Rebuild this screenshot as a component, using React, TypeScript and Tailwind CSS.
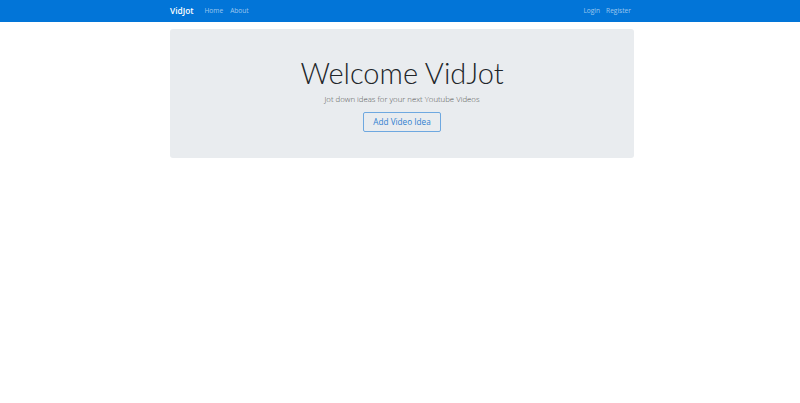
export default function App() {
  return (
    <div className="min-h-[403px] bg-white" style={{ fontFamily: '"Open Sans", "Liberation Sans", sans-serif' }}>
      <nav className="h-[22px] bg-[#0275d8] pl-[4px]">
        <div className="mx-auto flex h-full w-[464px] items-center justify-between">
          <div className="flex items-center pl-[-1px]">
            <span className="mr-[11px] text-[8.3px] font-semibold text-white">VidJot</span>
            <a className="mr-[7px] text-[6.6px] text-white/60">Home</a>
            <a className="text-[6.6px] text-white/60">About</a>
          </div>
          <div className="flex items-center gap-[6px] pr-[3px]">
            <a className="text-[6.6px] text-white/60">Login</a>
            <a className="text-[6.6px] text-white/60">Register</a>
          </div>
        </div>
      </nav>
      <div className="pl-[4px]">
        <div className="mx-auto mt-[7px] flex h-[129px] w-[464px] flex-col items-center rounded-[3px] bg-[#e9ecef] pt-[25.6px]">
          <h1 className="text-[29px] font-light leading-[36px] text-[#212529]" style={{ fontFamily: 'Lato, "Open Sans", sans-serif' }}>Welcome VidJot</h1>
          <p className="mt-[3.4px] text-[7.8px] font-light leading-[11px] text-[#555]">Jot down ideas for your next Youtube Videos</p>
          <button className="mt-[7px] h-[20px] w-[78px] rounded-[2px] border border-[#6ea8e0] text-[8.2px] text-[#2f7fd0]">Add Video Idea</button>
        </div>
      </div>
    </div>
  );
}
